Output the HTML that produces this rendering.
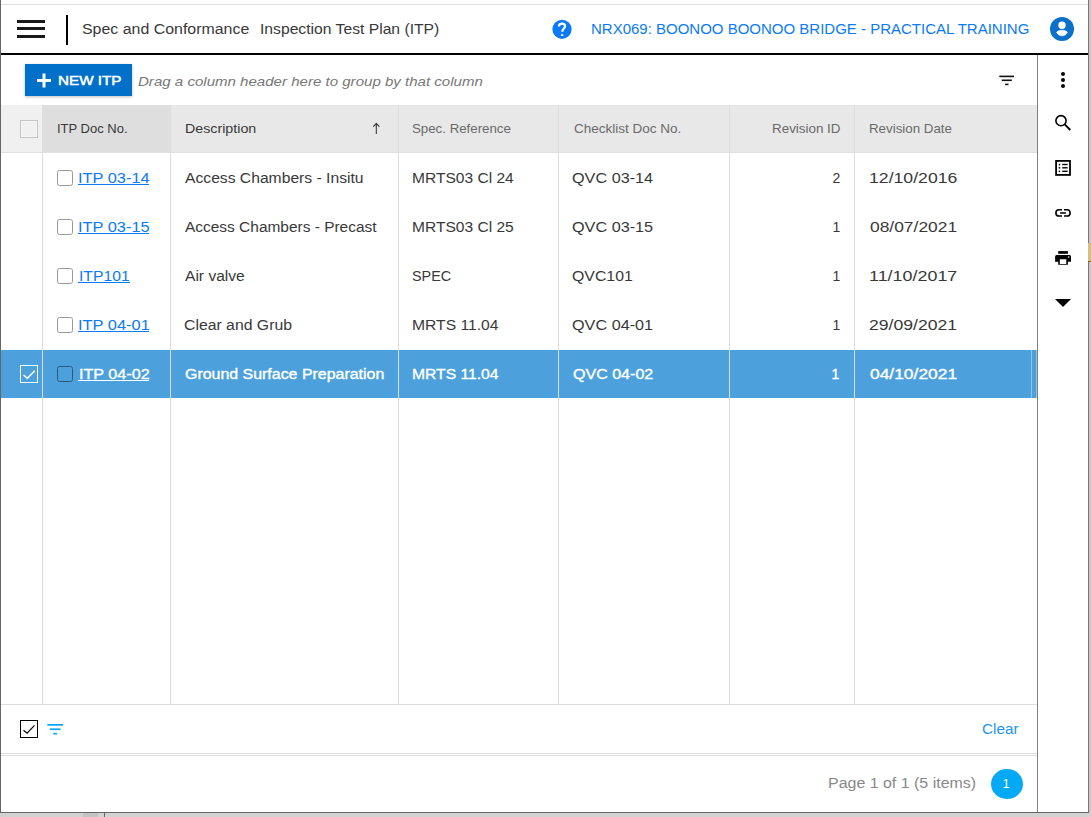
<!DOCTYPE html>
<html><head><meta charset="utf-8">
<style>
*{margin:0;padding:0;box-sizing:border-box}
html,body{width:1091px;height:817px;overflow:hidden;background:#ffffff;font-family:"Liberation Sans",sans-serif}
.a{position:absolute}
.tx{position:absolute;white-space:nowrap;transform-origin:0 0;font-family:"Liberation Sans",sans-serif}
</style></head><body>
<!-- outside strips -->
<div class="a" style="left:1089px;top:0;width:2px;height:817px;background:#c8c8c8"></div>
<div class="a" style="left:0;top:813px;width:1091px;height:4px;background:#d2d2d2"></div>
<div class="a" style="left:83px;top:813px;width:15px;height:4px;background:#c4c4c4"></div>
<div class="a" style="left:104px;top:813px;width:1px;height:4px;background:#666"></div>
<!-- window frame -->
<div class="a" style="left:0;top:0;width:1px;height:813px;background:#666"></div>
<div class="a" style="left:1088px;top:0;width:1px;height:813px;background:#777"></div>
<div class="a" style="left:0;top:812px;width:1089px;height:1px;background:#666"></div>
<div class="a" style="left:1px;top:4px;width:1087px;height:1px;background:#dcdfe3"></div>
<div class="a" style="left:1088px;top:243px;width:3px;height:18px;background:#d5c17f"></div>
<div class="a" style="left:1088px;top:261px;width:3px;height:1px;background:#8a5e10"></div>
<!-- header -->
<div class="a" style="left:1px;top:53px;width:1087px;height:2px;background:#000"></div>
<div class="a" style="left:17px;top:20px;width:28px;height:3px;background:#1a1a1a"></div>
<div class="a" style="left:17px;top:27.4px;width:28px;height:2.9px;background:#1a1a1a"></div>
<div class="a" style="left:17px;top:35px;width:28px;height:3px;background:#1a1a1a"></div>
<div class="a" style="left:66px;top:15px;width:2px;height:30px;background:#000"></div>
<svg class="a" style="left:0;top:0" width="1091" height="60">
 <circle cx="562" cy="29.3" r="9.6" fill="#0a7af8"/>
 <path d="M558.9 26.4 C558.9 24.4 560.4 23.6 562.1 23.6 C563.9 23.6 565.1 24.8 565.1 26.3 C565.1 28.3 562.2 28.8 562.2 31.7" fill="none" stroke="#fff" stroke-width="2.2"/>
 <rect x="561" y="34.2" width="2.3" height="1.8" fill="#fff"/>
 <circle cx="1062" cy="29" r="12" fill="#0a70c8"/>
 <circle cx="1062" cy="25.3" r="3.7" fill="#fff"/>
 <path d="M1056.6 32.2 C1058 30.9 1060 30.3 1062 30.3 C1064 30.3 1066 30.9 1067.4 32.2 C1066.4 34.6 1064.3 35.8 1062 35.8 C1059.7 35.8 1057.6 34.6 1056.6 32.2Z" fill="#fff" stroke="#fff" stroke-width="0.6" stroke-linejoin="round"/>
</svg>
<!-- toolbar -->
<div class="a" style="left:25px;top:64px;width:107px;height:32px;background:#0070c8;box-shadow:0 1px 3px rgba(0,0,0,0.25)"></div>
<svg class="a" style="left:0;top:55px" width="1037" height="50">
 <rect x="42.5" y="18.5" width="3" height="14" fill="#fff"/>
 <rect x="37" y="24" width="14" height="3" fill="#fff"/>
 <rect x="999.3" y="20.6" width="14.7" height="1.6" fill="#111"/>
 <rect x="1001.7" y="24.5" width="10.1" height="1.6" fill="#111"/>
 <rect x="1005.1" y="28.6" width="3.4" height="1.6" fill="#111"/>
</svg>
<!-- grid header -->
<div class="a" style="left:1px;top:105px;width:1036px;height:47px;background:#e8e8e8"></div>
<div class="a" style="left:1px;top:105px;width:41px;height:47px;background:#f0f0f0"></div>
<div class="a" style="left:42px;top:105px;width:128px;height:47px;background:#dedede"></div>
<div class="a" style="left:1px;top:152px;width:1036px;height:1px;background:#e0e0e0"></div>
<div class="a" style="left:20px;top:120px;width:18px;height:18px;border:1px solid #c4c4c4;background:#f0f0f0;box-shadow:inset 0 0 0 1px #f6f6f6"></div>
<svg class="a" style="left:370px;top:120px" width="14" height="18">
 <path d="M6.3 3.5 V14.1" stroke="#333" stroke-width="1.05" fill="none"/>
 <path d="M3.2 6.7 L6.3 3.6 L9.4 6.7" stroke="#333" stroke-width="1.1" fill="none"/>
</svg>
<!-- header column dividers -->
<div class="a" style="left:170px;top:105px;width:1px;height:47px;background:#dddddd"></div>
<div class="a" style="left:398px;top:105px;width:1px;height:47px;background:#dddddd"></div>
<div class="a" style="left:558px;top:105px;width:1px;height:47px;background:#dddddd"></div>
<div class="a" style="left:729px;top:105px;width:1px;height:47px;background:#dddddd"></div>
<div class="a" style="left:854px;top:105px;width:1px;height:47px;background:#dddddd"></div>
<!-- selected row -->
<div class="a" style="left:1px;top:350px;width:1036px;height:48px;background:#4ca1dc"></div>
<div class="a" style="left:1031px;top:350px;width:1px;height:48px;background:#8ec4e8"></div>
<div class="a" style="left:1036px;top:350px;width:1px;height:48px;background:#8ec4e8"></div>
<!-- body column dividers -->
<div class="a" style="left:42px;top:153px;width:1px;height:551px;background:#dddddd"></div>
<div class="a" style="left:170px;top:153px;width:1px;height:551px;background:#dddddd"></div>
<div class="a" style="left:398px;top:153px;width:1px;height:551px;background:#dddddd"></div>
<div class="a" style="left:558px;top:153px;width:1px;height:551px;background:#dddddd"></div>
<div class="a" style="left:729px;top:153px;width:1px;height:551px;background:#dddddd"></div>
<div class="a" style="left:854px;top:153px;width:1px;height:551px;background:#dddddd"></div>
<div class="a" style="left:1px;top:704px;width:1036px;height:1px;background:#dddddd"></div>
<!-- row checkboxes -->
<div class="a" style="left:57px;top:170px;width:16px;height:16px;border:1px solid #999;border-radius:2.5px"></div>
<div class="a" style="left:57px;top:219px;width:16px;height:16px;border:1px solid #999;border-radius:2.5px"></div>
<div class="a" style="left:57px;top:268px;width:16px;height:16px;border:1px solid #999;border-radius:2.5px"></div>
<div class="a" style="left:57px;top:317px;width:16px;height:16px;border:1px solid #999;border-radius:2.5px"></div>
<div class="a" style="left:57px;top:366px;width:16px;height:16px;border:1px solid #2b5a7c;border-radius:2.5px"></div>
<!-- selected checkbox -->
<div class="a" style="left:20px;top:365px;width:18px;height:18px;border:1px solid #fff"></div>
<svg class="a" style="left:20px;top:365px" width="18" height="18">
 <path d="M3.5 10 L7.3 13.3 L14.8 5.7" stroke="#fff" stroke-width="1.5" fill="none"/>
</svg>
<!-- footer -->
<div class="a" style="left:1px;top:753px;width:1036px;height:1px;background:#dcdcdc"></div>
<div class="a" style="left:1px;top:755px;width:1036px;height:1px;background:#dcdcdc"></div>
<div class="a" style="left:20px;top:720px;width:18px;height:18px;border:1px solid #000"></div>
<svg class="a" style="left:0;top:700px" width="80" height="50">
 <path d="M23.5 30.2 L27.1 33.1 L34.5 25.4" stroke="#000" stroke-width="1.2" fill="none"/>
 <rect x="47.3" y="24" width="15.7" height="1.7" fill="#03a9f4"/>
 <rect x="49.9" y="28.4" width="10.6" height="1.7" fill="#03a9f4"/>
 <rect x="53.3" y="32.8" width="3.6" height="1.7" fill="#03a9f4"/>
</svg>
<div class="a" style="left:991px;top:768.8px;width:32px;height:30.5px;border-radius:50%;background:#03a9f4"></div>
<!-- sidebar -->
<div class="a" style="left:1037px;top:55px;width:1px;height:757px;background:#808080"></div>
<svg class="a" style="left:1038px;top:55px" width="50" height="260">
 <g transform="translate(-1038,-55)">
 <circle cx="1063" cy="74" r="2" fill="#000"/>
 <circle cx="1063" cy="80" r="2" fill="#000"/>
 <circle cx="1063" cy="86" r="2" fill="#000"/>
 <circle cx="1061" cy="120.7" r="5.1" fill="none" stroke="#000" stroke-width="1.6"/>
 <path d="M1064.7 124.4 L1070.3 130" stroke="#000" stroke-width="1.8"/>
 <rect x="1056.1" y="160.9" width="13.9" height="14" fill="none" stroke="#000" stroke-width="1.8"/>
 <rect x="1058.7" y="163.8" width="1.5" height="1.5" fill="#000"/>
 <rect x="1058.7" y="167.1" width="1.5" height="1.5" fill="#000"/>
 <rect x="1058.7" y="170.6" width="1.5" height="1.5" fill="#000"/>
 <rect x="1062.2" y="163.8" width="5.4" height="1.4" fill="#000"/>
 <rect x="1062.2" y="167.1" width="5.4" height="1.4" fill="#000"/>
 <rect x="1062.2" y="170.6" width="5.4" height="1.4" fill="#000"/>
 <path d="M1062 209.8 H1059 A3.1 3.1 0 0 0 1059 216 H1062" fill="none" stroke="#000" stroke-width="1.6"/>
 <path d="M1064 209.8 H1067 A3.1 3.1 0 0 1 1067 216 H1064" fill="none" stroke="#000" stroke-width="1.6"/>
 <rect x="1060.1" y="212.25" width="5.8" height="1.5" fill="#000"/>
 <rect x="1058.2" y="251.1" width="9.7" height="2.7" fill="#000"/>
 <path d="M1056.6 254.9 H1069.5 Q1071 254.9 1071 256.4 V261.75 H1067.9 V264.7 H1058.2 V261.75 H1055.1 V256.4 Q1055.1 254.9 1056.6 254.9Z M1059.8 259.3 V263.9 H1066.3 V259.3Z" fill="#000" fill-rule="evenodd"/>
 <circle cx="1068.7" cy="257" r="0.8" fill="#fff"/>
 <path d="M1055 299 H1071 L1063 307Z" fill="#000"/>
 </g>
</svg>
<div class="tx" id="h1" style="left:81.86px;top:22.00px;font-size:14px;line-height:14px;color:#383838;font-weight:400;-webkit-text-stroke:0px #383838;font-style:normal;text-decoration:none;transform:scaleX(1.1370);">Spec and Conformance</div>
<div class="tx" id="h2" style="left:259.88px;top:22.00px;font-size:14px;line-height:14px;color:#383838;font-weight:400;-webkit-text-stroke:0px #383838;font-style:normal;text-decoration:none;transform:scaleX(1.1203);">Inspection Test Plan (ITP)</div>
<div class="tx" id="h3" style="left:590.93px;top:22.00px;font-size:14px;line-height:14px;color:#0a7af8;font-weight:400;-webkit-text-stroke:0px #0a7af8;font-style:normal;text-decoration:none;transform:scaleX(1.0713);">NRX069: BOONOO BOONOO BRIDGE - PRACTICAL TRAINING</div>
<div class="tx" id="btn" style="left:57.83px;top:74.00px;font-size:13px;line-height:13px;color:#ffffff;font-weight:400;-webkit-text-stroke:0.5px #ffffff;font-style:normal;text-decoration:none;transform:scaleX(1.1698);">NEW ITP</div>
<div class="tx" id="drag" style="left:138.42px;top:75.00px;font-size:13px;line-height:13px;color:#777777;font-weight:400;-webkit-text-stroke:0px #777777;font-style:italic;text-decoration:none;transform:scaleX(1.1583);">Drag a column header here to group by that column</div>
<div class="tx" id="gh1" style="left:57.00px;top:122.00px;font-size:13px;line-height:13px;color:#383838;font-weight:400;-webkit-text-stroke:0px #383838;font-style:normal;text-decoration:none;transform:scaleX(1.0000);">ITP Doc No.</div>
<div class="tx" id="gh2" style="left:184.90px;top:122.00px;font-size:13px;line-height:13px;color:#383838;font-weight:400;-webkit-text-stroke:0px #383838;font-style:normal;text-decoration:none;transform:scaleX(1.0952);">Description</div>
<div class="tx" id="gh3" style="left:411.98px;top:122.00px;font-size:13px;line-height:13px;color:#6a6a6a;font-weight:400;-webkit-text-stroke:0px #6a6a6a;font-style:normal;text-decoration:none;transform:scaleX(1.0212);">Spec. Reference</div>
<div class="tx" id="gh4" style="left:574.00px;top:122.00px;font-size:13px;line-height:13px;color:#6a6a6a;font-weight:400;-webkit-text-stroke:0px #6a6a6a;font-style:normal;text-decoration:none;transform:scaleX(1.0392);">Checklist Doc No.</div>
<div class="tx" id="gh5" style="left:771.97px;top:122.00px;font-size:13px;line-height:13px;color:#6a6a6a;font-weight:400;-webkit-text-stroke:0px #6a6a6a;font-style:normal;text-decoration:none;transform:scaleX(1.0308);">Revision ID</div>
<div class="tx" id="gh6" style="left:869.49px;top:122.00px;font-size:13px;line-height:13px;color:#6a6a6a;font-weight:400;-webkit-text-stroke:0px #6a6a6a;font-style:normal;text-decoration:none;transform:scaleX(1.0250);">Revision Date</div>
<div class="tx" id="r0a" style="left:77.56px;top:171.00px;font-size:14px;line-height:14px;color:#0a7af5;font-weight:400;-webkit-text-stroke:0px #0a7af5;font-style:normal;text-decoration:none;transform:scaleX(1.1700);">ITP 03-14</div>
<div class="tx" id="r0b" style="left:185.00px;top:171.00px;font-size:14px;line-height:14px;color:#383838;font-weight:400;-webkit-text-stroke:0px #383838;font-style:normal;text-decoration:none;transform:scaleX(1.1195);">Access Chambers - Insitu</div>
<div class="tx" id="r0c" style="left:411.89px;top:171.00px;font-size:14px;line-height:14px;color:#383838;font-weight:400;-webkit-text-stroke:0px #383838;font-style:normal;text-decoration:none;transform:scaleX(1.1111);">MRTS03 Cl 24</div>
<div class="tx" id="r0d" style="left:571.98px;top:171.00px;font-size:14px;line-height:14px;color:#383838;font-weight:400;-webkit-text-stroke:0px #383838;font-style:normal;text-decoration:none;transform:scaleX(1.1577);">QVC 03-14</div>
<div class="tx" id="r0e" style="left:832.50px;top:171.00px;font-size:14px;line-height:14px;color:#383838;font-weight:400;-webkit-text-stroke:0px #383838;">2</div>
<div class="tx" id="r0f" style="left:868.74px;top:171.00px;font-size:14px;line-height:14px;color:#383838;font-weight:400;-webkit-text-stroke:0px #383838;font-style:normal;text-decoration:none;transform:scaleX(1.2609);">12/10/2016</div>
<div class="tx" id="r1a" style="left:77.56px;top:220.00px;font-size:14px;line-height:14px;color:#0a7af5;font-weight:400;-webkit-text-stroke:0px #0a7af5;font-style:normal;text-decoration:none;transform:scaleX(1.1700);">ITP 03-15</div>
<div class="tx" id="r1b" style="left:185.00px;top:220.00px;font-size:14px;line-height:14px;color:#383838;font-weight:400;-webkit-text-stroke:0px #383838;font-style:normal;text-decoration:none;transform:scaleX(1.1041);">Access Chambers - Precast</div>
<div class="tx" id="r1c" style="left:411.89px;top:220.00px;font-size:14px;line-height:14px;color:#383838;font-weight:400;-webkit-text-stroke:0px #383838;font-style:normal;text-decoration:none;transform:scaleX(1.1111);">MRTS03 Cl 25</div>
<div class="tx" id="r1d" style="left:571.98px;top:220.00px;font-size:14px;line-height:14px;color:#383838;font-weight:400;-webkit-text-stroke:0px #383838;font-style:normal;text-decoration:none;transform:scaleX(1.1577);">QVC 03-15</div>
<div class="tx" id="r1e" style="left:832.50px;top:220.00px;font-size:14px;line-height:14px;color:#383838;font-weight:400;-webkit-text-stroke:0px #383838;">1</div>
<div class="tx" id="r1f" style="left:870.00px;top:220.00px;font-size:14px;line-height:14px;color:#383838;font-weight:400;-webkit-text-stroke:0px #383838;font-style:normal;text-decoration:none;transform:scaleX(1.2429);">08/07/2021</div>
<div class="tx" id="r2a" style="left:78.57px;top:269.00px;font-size:14px;line-height:14px;color:#0a7af5;font-weight:400;-webkit-text-stroke:0px #0a7af5;font-style:normal;text-decoration:none;transform:scaleX(1.1223);">ITP101</div>
<div class="tx" id="r2b" style="left:185.00px;top:269.00px;font-size:14px;line-height:14px;color:#383838;font-weight:400;-webkit-text-stroke:0px #383838;font-style:normal;text-decoration:none;transform:scaleX(1.1136);">Air valve</div>
<div class="tx" id="r2c" style="left:411.97px;top:269.00px;font-size:14px;line-height:14px;color:#383838;font-weight:400;-webkit-text-stroke:0px #383838;font-style:normal;text-decoration:none;transform:scaleX(1.0287);">SPEC</div>
<div class="tx" id="r2d" style="left:571.99px;top:269.00px;font-size:14px;line-height:14px;color:#383838;font-weight:400;-webkit-text-stroke:0px #383838;font-style:normal;text-decoration:none;transform:scaleX(1.1325);">QVC101</div>
<div class="tx" id="r2e" style="left:832.50px;top:269.00px;font-size:14px;line-height:14px;color:#383838;font-weight:400;-webkit-text-stroke:0px #383838;">1</div>
<div class="tx" id="r2f" style="left:868.72px;top:269.00px;font-size:14px;line-height:14px;color:#383838;font-weight:400;-webkit-text-stroke:0px #383838;font-style:normal;text-decoration:none;transform:scaleX(1.2794);">11/10/2017</div>
<div class="tx" id="r3a" style="left:77.55px;top:318.00px;font-size:14px;line-height:14px;color:#0a7af5;font-weight:400;-webkit-text-stroke:0px #0a7af5;font-style:normal;text-decoration:none;transform:scaleX(1.1734);">ITP 04-01</div>
<div class="tx" id="r3b" style="left:183.88px;top:318.00px;font-size:14px;line-height:14px;color:#383838;font-weight:400;-webkit-text-stroke:0px #383838;font-style:normal;text-decoration:none;transform:scaleX(1.1278);">Clear and Grub</div>
<div class="tx" id="r3c" style="left:411.89px;top:318.00px;font-size:14px;line-height:14px;color:#383838;font-weight:400;-webkit-text-stroke:0px #383838;font-style:normal;text-decoration:none;transform:scaleX(1.1186);">MRTS 11.04</div>
<div class="tx" id="r3d" style="left:571.98px;top:318.00px;font-size:14px;line-height:14px;color:#383838;font-weight:400;-webkit-text-stroke:0px #383838;font-style:normal;text-decoration:none;transform:scaleX(1.1577);">QVC 04-01</div>
<div class="tx" id="r3e" style="left:832.50px;top:318.00px;font-size:14px;line-height:14px;color:#383838;font-weight:400;-webkit-text-stroke:0px #383838;">1</div>
<div class="tx" id="r3f" style="left:868.99px;top:318.00px;font-size:14px;line-height:14px;color:#383838;font-weight:400;-webkit-text-stroke:0px #383838;font-style:normal;text-decoration:none;transform:scaleX(1.2580);">29/09/2021</div>
<div class="tx" id="r4a" style="left:78.56px;top:367.00px;font-size:14px;line-height:14px;color:#ffffff;font-weight:400;-webkit-text-stroke:0.35px #ffffff;font-style:normal;text-decoration:none;transform:scaleX(1.1536);">ITP 04-02</div>
<div class="tx" id="r4b" style="left:184.86px;top:367.00px;font-size:14px;line-height:14px;color:#ffffff;font-weight:400;-webkit-text-stroke:0.35px #ffffff;font-style:normal;text-decoration:none;transform:scaleX(1.1380);">Ground Surface Preparation</div>
<div class="tx" id="r4c" style="left:411.89px;top:367.00px;font-size:14px;line-height:14px;color:#ffffff;font-weight:400;-webkit-text-stroke:0.35px #ffffff;font-style:normal;text-decoration:none;transform:scaleX(1.1186);">MRTS 11.04</div>
<div class="tx" id="r4d" style="left:572.85px;top:367.00px;font-size:14px;line-height:14px;color:#ffffff;font-weight:400;-webkit-text-stroke:0.35px #ffffff;font-style:normal;text-decoration:none;transform:scaleX(1.1453);">QVC 04-02</div>
<div class="tx" id="r4e" style="left:831.50px;top:367.00px;font-size:14px;line-height:14px;color:#ffffff;font-weight:400;-webkit-text-stroke:0.35px #ffffff;">1</div>
<div class="tx" id="r4f" style="left:869.99px;top:367.00px;font-size:14px;line-height:14px;color:#ffffff;font-weight:400;-webkit-text-stroke:0.35px #ffffff;font-style:normal;text-decoration:none;transform:scaleX(1.2430);">04/10/2021</div>
<div class="tx" id="clear" style="left:981.90px;top:722.00px;font-size:14px;line-height:14px;color:#2196f3;font-weight:400;-webkit-text-stroke:0px #2196f3;font-style:normal;text-decoration:none;transform:scaleX(1.0920);">Clear</div>
<div class="tx" id="page" style="left:828.43px;top:776.00px;font-size:14px;line-height:14px;color:#888888;font-weight:400;-webkit-text-stroke:0px #888888;font-style:normal;text-decoration:none;transform:scaleX(1.1396);">Page 1 of 1 (5 items)</div>
<div class="tx" id="pg1" style="left:1002.50px;top:777.00px;font-size:13px;line-height:13px;color:#ffffff;font-weight:400;-webkit-text-stroke:0px #ffffff;font-style:normal;text-decoration:none;transform:scaleX(1.0000);">1</div>
<div class="a" style="left:78px;top:184px;width:71.20px;height:1px;background:#0a7af5"></div>
<div class="a" style="left:78px;top:233px;width:71.20px;height:1px;background:#0a7af5"></div>
<div class="a" style="left:78px;top:282px;width:51.70px;height:1px;background:#0a7af5"></div>
<div class="a" style="left:78px;top:331px;width:71.20px;height:1px;background:#0a7af5"></div>
<div class="a" style="left:78px;top:380px;width:71.20px;height:1px;background:#ffffff"></div>
</body></html>
